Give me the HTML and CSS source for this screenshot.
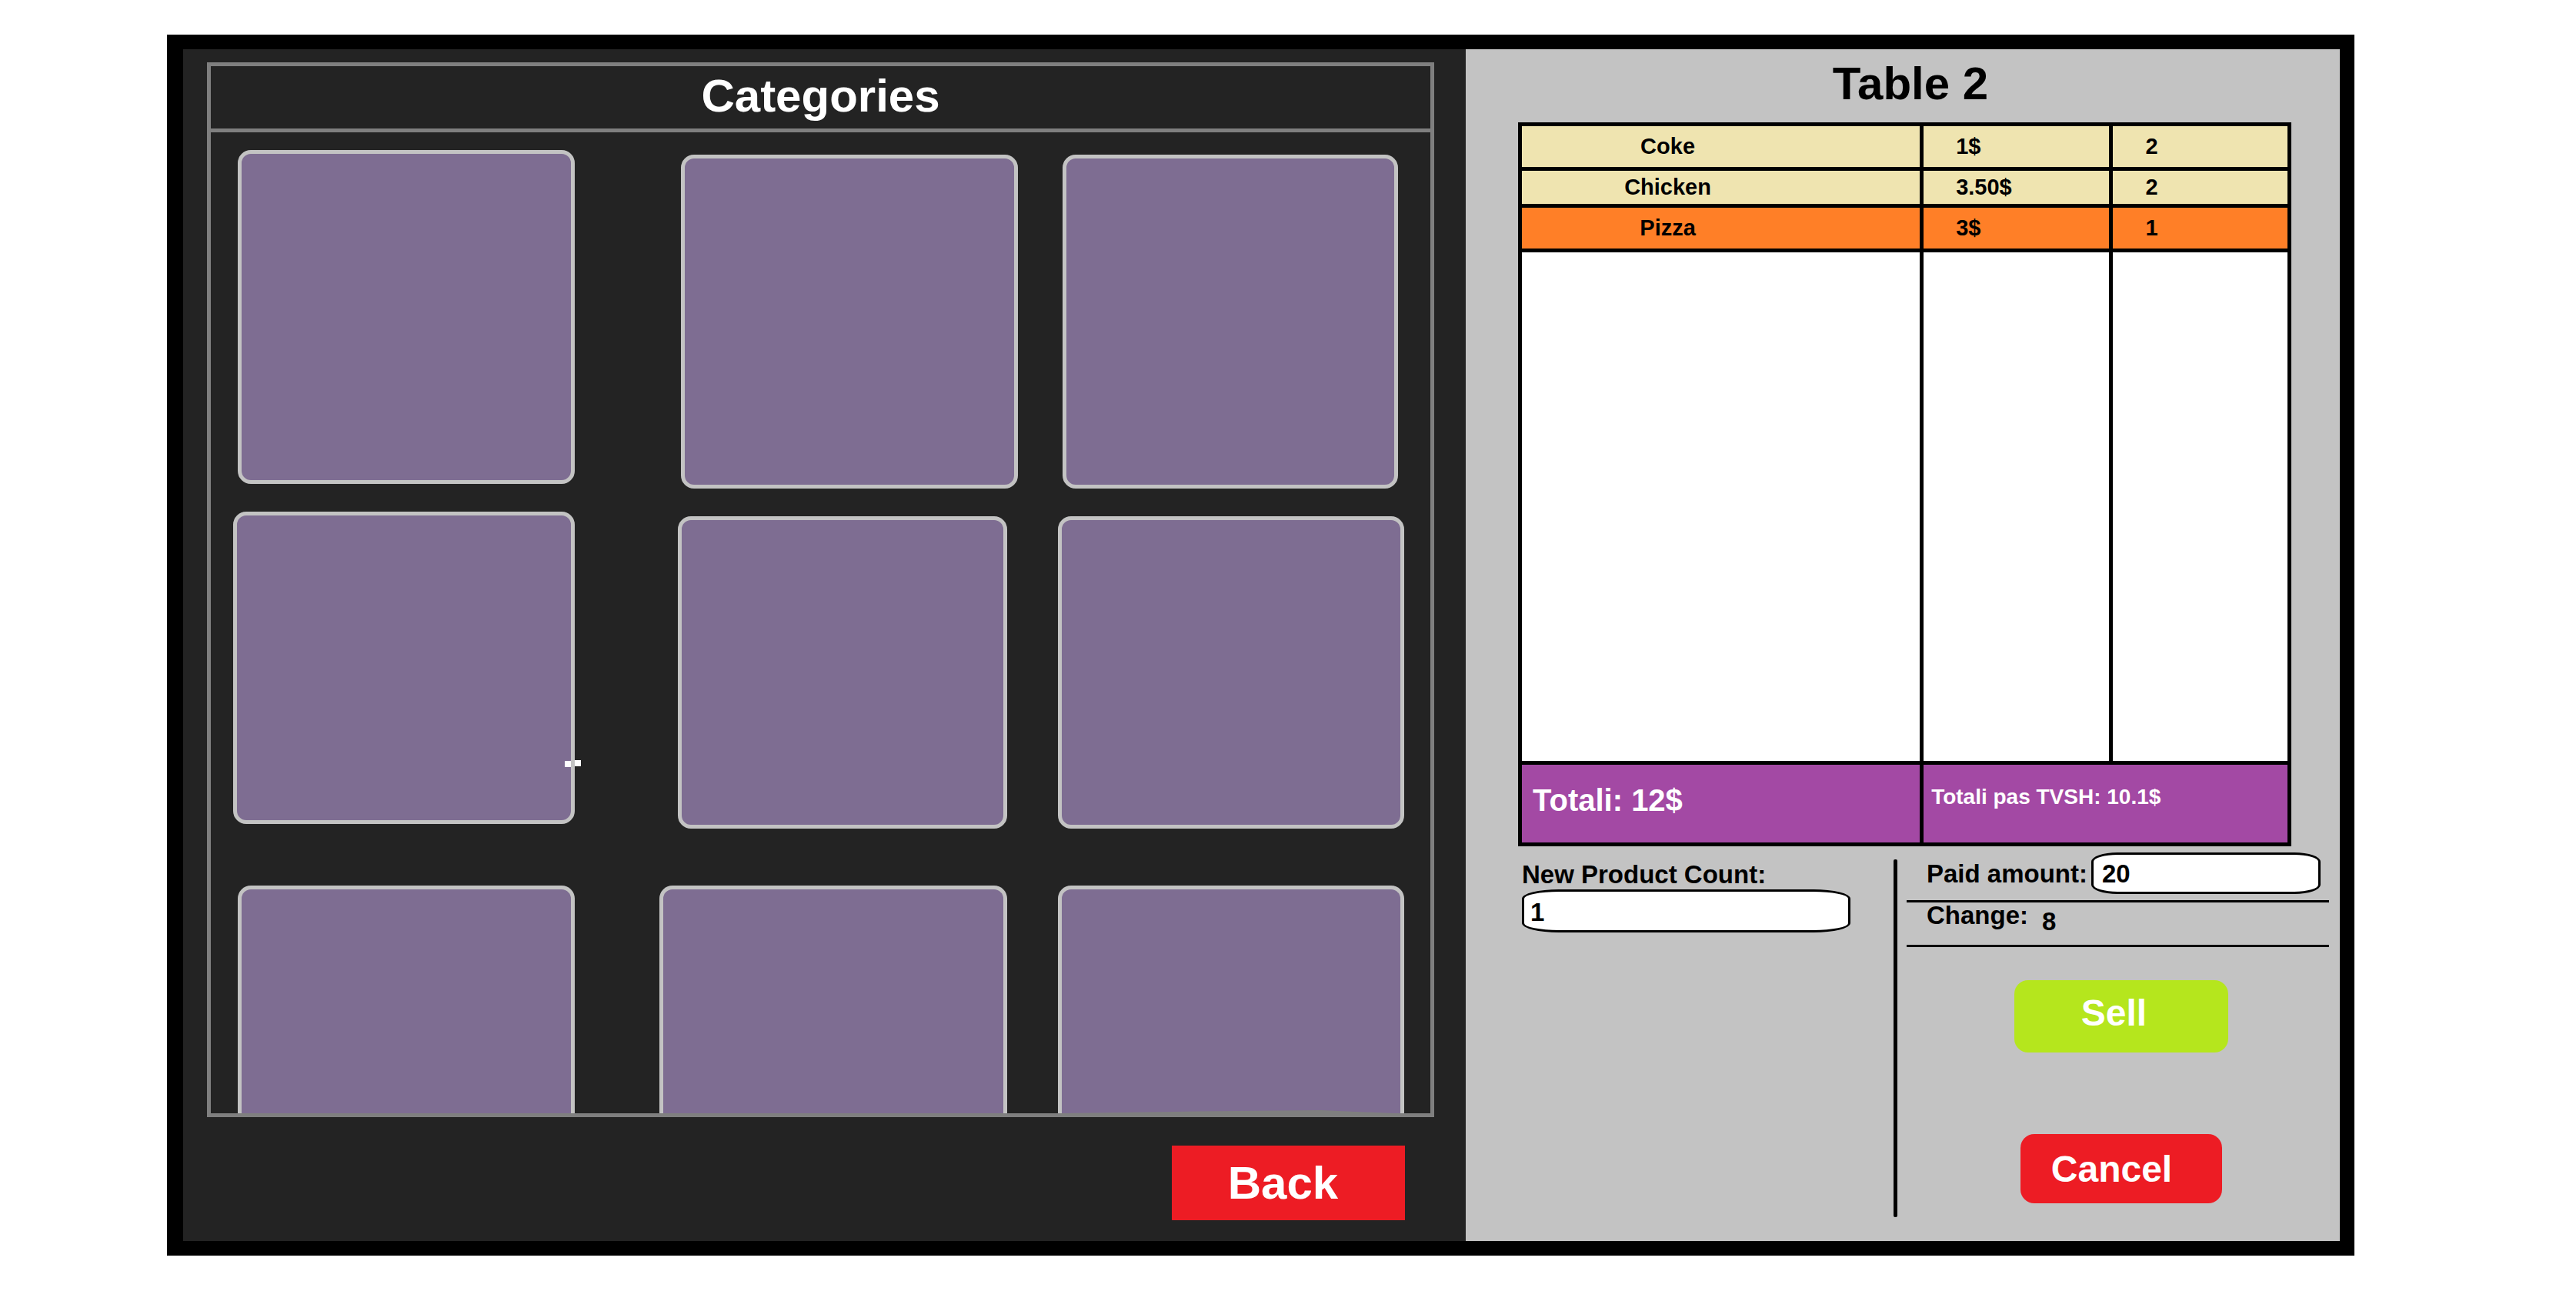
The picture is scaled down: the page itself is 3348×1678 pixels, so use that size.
FILE: index.html
```html
<!DOCTYPE html>
<html lang="en">
<head>
<meta charset="utf-8">
<title>Table 2</title>
<link rel="stylesheet" href="styles.css">
</head>
<body>
<main class="terminal">
  <section class="catalog">
    <div class="catalog-box">
      <h1 class="catalog-title">Categories</h1>
      <div class="tiles">
        <div class="tile-row tile-row-first">
          <button class="tile" type="button" aria-label="Category 1"></button>
          <button class="tile tile-low" type="button" aria-label="Category 2"></button>
          <button class="tile tile-low" type="button" aria-label="Category 3"></button>
        </div>
        <div class="tile-row tile-row-second">
          <button class="tile tile-marked" type="button" aria-label="Category 4"></button>
          <button class="tile tile-low" type="button" aria-label="Category 5"></button>
          <button class="tile tile-low" type="button" aria-label="Category 6"></button>
        </div>
        <div class="tile-row tile-row-cut">
          <button class="tile" type="button" aria-label="Category 7"></button>
          <button class="tile" type="button" aria-label="Category 8"></button>
          <button class="tile tile-worn" type="button" aria-label="Category 9"></button>
        </div>
      </div>
    </div>
    <button class="back" type="button">Back</button>
  </section>

  <section class="order">
    <h2 class="order-title">Table 2</h2>
    <table class="bill">
      <colgroup><col class="col-name"><col class="col-price"><col class="col-count"></colgroup>
      <tbody>
        <tr class="item"><td class="name">Coke</td><td>1$</td><td>2</td></tr>
        <tr class="item item-slim"><td class="name">Chicken</td><td>3.50$</td><td>2</td></tr>
        <tr class="item item-selected"><td class="name">Pizza</td><td>3$</td><td>1</td></tr>
        <tr class="blank"><td></td><td></td><td></td></tr>
      </tbody>
      <tfoot>
        <tr class="totals"><td class="total">Totali: 12$</td><td class="net" colspan="2">Totali pas TVSH: 10.1$</td></tr>
      </tfoot>
    </table>

    <div class="checkout">
      <div class="count">
        <label class="label" for="count">New Product Count:</label>
        <input class="field field-count" id="count" type="text" value="1">
      </div>
      <div class="divider"></div>
      <div class="payment">
        <div class="line paid">
          <label class="label" for="paid">Paid amount:</label>
          <input class="field field-paid" id="paid" type="text" value="20">
        </div>
        <div class="line change">
          <label class="label" for="change">Change:</label>
          <output class="label change-value" id="change">8</output>
        </div>
        <div class="actions">
          <button class="action sell" type="button">Sell</button>
          <button class="action cancel" type="button">Cancel</button>
        </div>
      </div>
    </div>
  </section>
</main>
</body>
</html>
```

FILE: styles.css
```css
* {
  box-sizing: border-box;
}

body {
  margin: 0;
  background: #fff;
  color: #000;
  font-family: "Liberation Sans", Arial, sans-serif;
  font-weight: bold;
}

button,
input {
  margin: 0;
  font: inherit;
}

h1,
h2 {
  margin: 0;
  font-size: 60px;
  line-height: 69px;
  text-align: center;
}

.terminal {
  display: grid;
  grid-template-columns: minmax(0, 1667fr) minmax(0, 1136fr);
  margin: 45px 288px 46px 217px;
  border: 19px solid #000;
  border-left-width: 21px;
}

/* Category side */

.catalog {
  display: flex;
  flex-direction: column;
  padding: 17px 41px 27px 31px;
  background: #232323;
}

.catalog-box {
  border: 5px solid #7f7f7f;
}

.catalog-title {
  padding: 4px 0 8px;
  border-bottom: 5px solid #7f7f7f;
  color: #fff;
}

.tiles {
  padding-top: 23px;
}

/* Uneven columns: tile and gap widths alternate */
.tile-row {
  display: grid;
  align-items: start;
}

.tile-row-first {
  grid-template-columns: 438fr 138fr 438fr 58fr 436fr;
  margin-bottom: 30px;
  padding: 0 42px 0 35px;
}

.tile-row-second {
  grid-template-columns: 444fr 134fr 428fr 66fr 450fr;
  margin-bottom: 74px;
  padding: 0 34px 0 29px;
}

.tile-row-cut {
  grid-template-columns: 438fr 110fr 452fr 66fr 450fr;
  padding: 0 34px 0 35px;
}

.tile {
  padding: 0;
  border: 5px solid #c3c3c3;
  border-radius: 17px;
  background: #7e6d92;
}

.tile:nth-child(1) {
  grid-column: 1;
}

.tile:nth-child(2) {
  grid-column: 3;
}

.tile:nth-child(3) {
  grid-column: 5;
}

.tile-low {
  margin-top: 6px;
}

.tile-row-first .tile {
  height: 434px;
}

.tile-row-second .tile {
  height: 406px;
}

.tile-row-cut .tile {
  height: 296px;
  border-bottom: 0;
  border-radius: 17px 17px 0 0;
}

.tile-marked,
.tile-worn {
  position: relative;
}

.tile-marked::before,
.tile-marked::after {
  content: "";
  position: absolute;
  top: 319px;
  right: 0;
  width: 8px;
  height: 8px;
  background: #fff;
}

.tile-marked::after {
  top: 318px;
  right: -13px;
}

.tile-worn::after {
  content: "";
  position: absolute;
  right: 8px;
  bottom: 0;
  left: 0;
  height: 4px;
  background: #7f7f7f;
  clip-path: polygon(0 100%, 40% 40%, 78% 0, 100% 100%);
}

.back {
  align-self: flex-end;
  width: 303px;
  height: 97px;
  margin: 37px 38px 0 0;
  padding: 0 14px 0 0;
  border: 0;
  background: #ed1c24;
  color: #fff;
  font-size: 60px;
}

/* Order side */

.order {
  padding: 10px 0 31px;
  background: #c3c3c3;
}

.order-title {
  padding-left: 20px;
}

.bill {
  table-layout: fixed;
  width: calc(100% - 131px);
  margin: 16px 63px 0 68px;
  border-spacing: 5px;
  background: #000;
  font-size: 29px;
}

.bill td {
  padding: 0 0 0 42px;
  background: #fff;
}

.col-name {
  width: 52.5%;
}

.col-price {
  width: 24.5%;
}

.bill .item td {
  height: 53px;
  background: #efe4b0;
}

.bill .item-slim td {
  height: 43px;
}

.bill .item-selected td {
  background: #ff7f27;
}

.bill .item .name {
  padding: 0 138px 0 0;
  text-align: center;
}

.bill .blank td {
  height: 661px;
}

.bill .totals td {
  height: 101px;
  background: #a349a4;
  color: #fff;
}

.bill .totals .total {
  padding: 0 0 8px 14px;
  font-size: 40px;
}

.bill .totals .net {
  padding: 0 0 18px 10px;
  font-size: 28px;
}

.checkout {
  display: grid;
  grid-template-columns: minmax(0, 556fr) 5px minmax(0, 575fr);
  margin-top: 8px;
}

.label {
  font-size: 33px;
  line-height: 33px;
  white-space: nowrap;
}

.field {
  min-width: 0;
  border: 3px solid #000;
  border-radius: 48px / 12px;
  background: #fff;
  color: #000;
  font-size: 33px;
}

.count {
  display: flex;
  flex-direction: column;
  gap: 3px;
  padding: 12px 56px 0 73px;
}

.field-count {
  height: 56px;
  padding: 4px 8px 0;
}

.divider {
  margin-top: 9px;
  border-radius: 2px;
  background: #000;
}

.payment {
  padding: 0 14px 18px 12px;
}

.line {
  display: flex;
  border-bottom: 3px solid #000;
}

.paid {
  align-items: center;
  gap: 5px;
  padding: 0 11px 8px 26px;
}

.field-paid {
  flex: 1;
  height: 54px;
  padding: 2px 11px 0;
  border-radius: 34px / 12px;
}

.change {
  gap: 18px;
  padding: 0 0 14px 26px;
}

.change-value {
  padding-top: 8px;
}

.actions {
  display: flex;
  flex-direction: column;
  align-items: center;
  gap: 106px;
  padding: 43px 0 0 8px;
}

.action {
  border: 0;
  border-radius: 18px;
  color: #fff;
  font-size: 48px;
}

.sell {
  width: 278px;
  height: 94px;
  padding: 0 18px 10px 0;
  background: #b5e61d;
}

.cancel {
  width: 262px;
  height: 90px;
  padding: 0 24px 0 0;
  background: #ed1c24;
}
```
